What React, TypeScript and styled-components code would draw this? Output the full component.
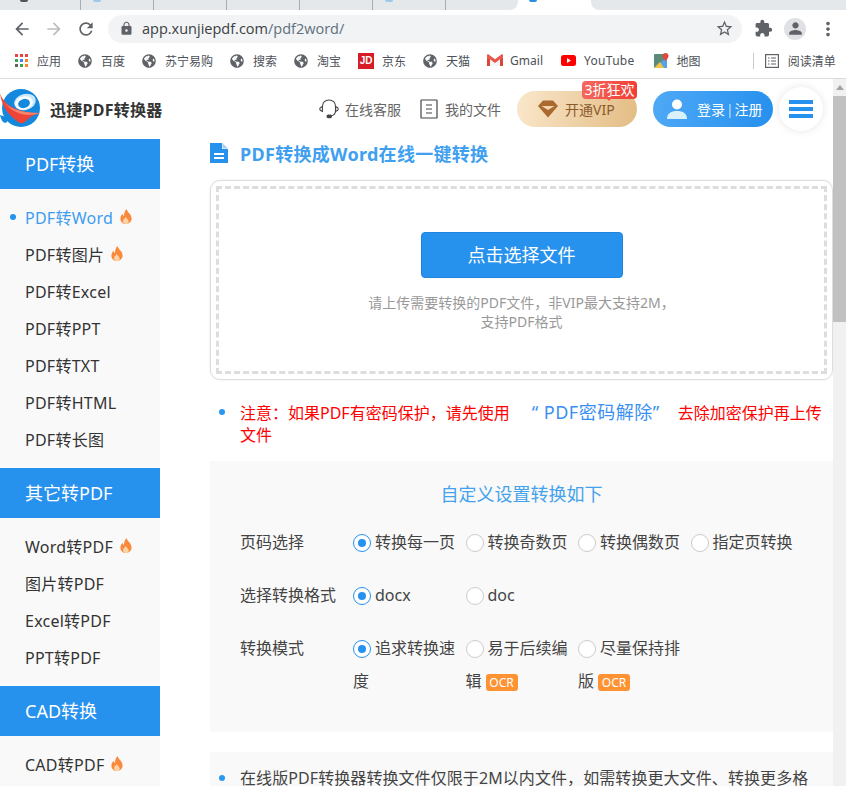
import React from 'react';
import styled, { createGlobalStyle } from 'styled-components';
import { MdArrowBack, MdArrowForward, MdRefresh, MdLock, MdStarBorder, MdExtension, MdPerson, MdMoreVert } from 'react-icons/md';
import { FaGlobeAmericas } from 'react-icons/fa';

const GlobalStyle = createGlobalStyle`
  html, body {
    margin: 0;
    padding: 0;
    height: 100%;
    overflow: hidden;
    background: #fff;
  }
  * {
    box-sizing: border-box;
  }
  body {
    font-family: "Noto Sans", "Noto Sans CJK SC", sans-serif;
    color: #333;
  }
`;

const Window = styled.div`
  width: 846px;
  height: 786px;
  display: flex;
  flex-direction: column;
  overflow: hidden;
`;

/* browser chrome */
const TabStrip = styled.div`
  height: 10px;
  flex: none;
  display: flex;
  background: #fff;
`;

const TabGroup = styled.div<{ $side: 'left' | 'right' }>`
  display: flex;
  padding-left: ${({ $side }) => ($side === 'left' ? '8px' : '0')};
  width: ${({ $side }) => ($side === 'left' ? '518px' : 'auto')};
  flex: ${({ $side }) => ($side === 'left' ? 'none' : '1')};
  background: #e5e8eb;
  border-bottom-right-radius: ${({ $side }) => ($side === 'left' ? '8px' : '0')};
  border-bottom-left-radius: ${({ $side }) => ($side === 'right' ? '8px' : '0')};
`;

const ClosedTab = styled.div`
  width: 73px;
  height: 10px;
  border-right: 1px solid #a9adb2;
  display: flex;
  align-items: flex-start;
  padding-left: 12px;
`;

const ActiveTab = styled.div`
  width: 73px;
  flex: none;
  background: #fff;
  display: flex;
  align-items: flex-start;
  padding-left: 11px;
`;

const TabFavicon = styled.span<{ $color: string }>`
  display: block;
  width: 8px;
  height: 2px;
  border-radius: 0 0 4px 4px;
  background: ${({ $color }) => $color};
`;

const Toolbar = styled.div`
  height: 33px;
  flex: none;
  display: flex;
  align-items: center;
  padding: 4px 0 0 12px;
  color: #5f6368;
`;

const NavButton = styled.span<{ $muted?: boolean }>`
  width: 20px;
  height: 20px;
  margin-right: 12px;
  font-size: 20px;
  display: flex;
  color: ${({ $muted }) => ($muted ? '#bcbdc0' : '#5f6368')};
`;

const AddressBar = styled.div`
  width: 634px;
  height: 28px;
  border-radius: 14px;
  background: #f1f3f4;
  display: flex;
  align-items: center;
  padding: 0 8px 0 11px;
  font-size: 14.5px;
  font-family: "Open Sans", "Noto Sans", sans-serif;
`;

const LockIcon = styled(MdLock)`
  font-size: 15px;
  color: #5f6368;
  margin-right: 8px;
`;

const Host = styled.span`
  color: #3c4043;
`;

const UrlPath = styled.span`
  color: #5f7080;
  flex: 1;
`;

const StarIcon = styled(MdStarBorder)`
  font-size: 19px;
  color: #5f6368;
`;

const ToolbarRight = styled.div`
  display: flex;
  align-items: center;
  margin-left: 12px;
`;

const PuzzleIcon = styled(MdExtension)`
  font-size: 19px;
  color: #5f6368;
`;

const Avatar = styled.span`
  width: 22px;
  height: 22px;
  margin-left: 11px;
  border-radius: 50%;
  background: #dfe1e5;
  color: #5f6368;
  display: flex;
  align-items: center;
  justify-content: center;
  font-size: 19px;
`;

const MoreIcon = styled(MdMoreVert)`
  font-size: 22px;
  margin-left: 11px;
  color: #5f6368;
`;

const BookmarkBar = styled.div`
  height: 36px;
  flex: none;
  display: flex;
  align-items: center;
  padding-left: 15px;
  gap: 17px;
  border-bottom: 1px solid #dadce0;
  font-size: 12px;
  color: #4c5157;
`;

const Bookmark = styled.div<{ $gap?: number; $after?: number }>`
  display: flex;
  align-items: center;
  gap: ${({ $gap }) => $gap ?? 9}px;
  margin-right: ${({ $after }) => $after ?? 0}px;
  white-space: nowrap;
`;

const LatinLabel = styled.span`
  letter-spacing: 0.3px;
`;

const GlobeIcon = styled(FaGlobeAmericas)`
  width: 14px;
  height: 14px;
  color: #5f6368;
`;

const BookmarkDivider = styled.div`
  width: 1px;
  height: 16px;
  margin-left: 35px;
  margin-right: -6px;
  background: #c9cbce;
`;

const AppsGrid = styled.span`
  width: 13px;
  height: 13px;
  display: grid;
  grid-template-columns: repeat(3, 3px);
  grid-auto-rows: 3px;
  gap: 2px;
`;

const AppsDot = styled.i<{ $color: string }>`
  display: block;
  background: ${({ $color }) => $color};
`;

const JdBadge = styled.span`
  width: 16px;
  height: 16px;
  background: #d71c24;
  color: #fff;
  font: bold 10px "Liberation Sans", sans-serif;
  display: flex;
  align-items: center;
  justify-content: center;
`;

/* site */
const PageArea = styled.div`
  flex: 1;
  min-height: 0;
  display: flex;
`;

const Page = styled.div`
  width: 833px;
  flex: none;
  display: flex;
  flex-direction: column;
  overflow: hidden;
`;

const ScrollTrack = styled.div`
  flex: 1;
  background: #f1f1f1;
  display: flex;
  flex-direction: column;
  align-items: center;
`;

const ScrollArrow = styled.span`
  margin: 6px 0 6px;
  width: 0;
  height: 0;
  border-left: 4px solid transparent;
  border-right: 4px solid transparent;
  border-bottom: 5px solid #a3a3a3;
`;

const ScrollThumb = styled.div`
  width: 100%;
  height: 226px;
  background: #c1c1c1;
`;

const Header = styled.header`
  height: 60px;
  flex: none;
  display: flex;
  align-items: center;
  justify-content: space-between;
  padding-right: 10px;
`;

const Brand = styled.div`
  display: flex;
  align-items: center;
  gap: 10px;
  font-size: 16px;
  font-weight: 700;
  letter-spacing: 0.25px;
  color: #333;
`;

const HeaderActions = styled.div`
  display: flex;
  align-items: center;
`;

const HeaderLink = styled.div<{ $gap: number; $after: number }>`
  display: flex;
  align-items: center;
  gap: ${({ $gap }) => $gap}px;
  margin-right: ${({ $after }) => $after}px;
  font-size: 14px;
  color: #666;
`;

const PillButton = styled.div<{ $kind: 'vip' | 'login' }>`
  position: relative;
  width: 120px;
  height: 36px;
  border-radius: 18px;
  display: flex;
  align-items: center;
  font-size: 14px;
  padding-left: ${({ $kind }) => ($kind === 'vip' ? '21px' : '14px')};
  gap: ${({ $kind }) => ($kind === 'vip' ? '7px' : '10px')};
  margin-right: ${({ $kind }) => ($kind === 'vip' ? '16px' : '6px')};
  color: ${({ $kind }) => ($kind === 'vip' ? '#8b5a2b' : '#fff')};
  background: ${({ $kind }) =>
    $kind === 'vip'
      ? 'linear-gradient(100deg, #fae7cb, #e3bc84)'
      : 'linear-gradient(100deg, #4fa9f6, #2590ee)'};
`;

const PromoBadge = styled.span`
  position: absolute;
  top: -10px;
  right: 0;
  width: 55px;
  height: 18px;
  border-radius: 4px;
  background: linear-gradient(100deg, #f4695f, #f23c33);
  color: #fff;
  font-size: 14px;
  line-height: 18px;
  text-align: center;
  white-space: nowrap;
  &::after {
    content: '';
    position: absolute;
    left: 24px;
    bottom: -2px;
    border-left: 3px solid transparent;
    border-right: 3px solid transparent;
    border-top: 3px solid #f4554d;
  }
`;

const LoginDivider = styled.span`
  margin: 0 1px;
  font-weight: 300;
`;

const LoginText = styled.span`
  white-space: nowrap;
`;

const MenuCircle = styled.div`
  width: 44px;
  height: 44px;
  border-radius: 50%;
  background: #fff;
  box-shadow: 0 0 8px rgba(0, 0, 0, 0.1);
  display: flex;
  flex-direction: column;
  align-items: center;
  justify-content: center;
  gap: 3px;
`;

const MenuLine = styled.span`
  width: 24px;
  height: 4px;
  background: #2791ee;
`;

const Body = styled.div`
  flex: 1;
  min-height: 0;
  display: flex;
`;

const Sidebar = styled.nav`
  width: 160px;
  flex: none;
  background: #f9f9f9;
`;

const GroupTitle = styled.div`
  height: 50px;
  background: #2791ee;
  color: #fff;
  font-size: 18px;
  line-height: 50px;
  padding-left: 25px;
`;

const GroupList = styled.ul`
  list-style: none;
  margin: 0;
  padding: 10px 0;
`;

const GroupItem = styled.li<{ $active?: boolean }>`
  position: relative;
  height: 37px;
  padding: 0 0 2px 25px;
  display: flex;
  align-items: center;
  gap: 7px;
  font-size: 16px;
  letter-spacing: 0.25px;
  color: ${({ $active }) => ($active ? '#3f9cf0' : '#333')};
  &::before {
    content: '';
    display: ${({ $active }) => ($active ? 'block' : 'none')};
    position: absolute;
    left: 10px;
    top: 15px;
    width: 6px;
    height: 6px;
    border-radius: 50%;
    background: #2791ee;
  }
`;

const Main = styled.main`
  flex: 1;
  min-width: 0;
  padding-left: 50px;
  overflow: hidden;
`;

const PageTitle = styled.h1`
  margin: 0 0 11px;
  height: 30px;
  padding-bottom: 2px;
  display: flex;
  align-items: center;
  gap: 12px;
  font-size: 18px;
  font-weight: 700;
  letter-spacing: 0.3px;
  color: #3fa0f0;
`;

const UploadCard = styled.section`
  height: 200px;
  padding: 5px;
  border: 1px solid #ddd;
  border-radius: 10px;
  box-shadow: 0 0 3px rgba(0, 0, 0, 0.08);
`;

const DropZone = styled.div`
  height: 100%;
  border: 3px dashed #ddd;
  display: flex;
  flex-direction: column;
  align-items: center;
  padding-top: 43px;
`;

const SelectButton = styled.button`
  width: 202px;
  height: 46px;
  padding: 0 0 2px;
  border: 1px solid #1f84de;
  border-radius: 4px;
  background: #2791ee;
  color: #fff;
  font-family: inherit;
  font-size: 18px;
`;

const Hint = styled.p`
  margin: 15px 0 0;
  font-size: 14px;
  line-height: 19px;
  color: #999;
  text-align: center;
`;

const Notice = styled.div`
  position: relative;
  margin-top: 21px;
  padding: 0 8px 0 30px;
  min-height: 60px;
  font-size: 16px;
  line-height: 22px;
  color: #f00;
`;

const Bullet = styled.span`
  position: absolute;
  left: 9px;
  top: 8px;
  width: 6px;
  height: 6px;
  border-radius: 50%;
  background: #2a97f0;
`;

const NoticeLink = styled.a`
  margin: 0 18px 0 22px;
  font-size: 18px;
  letter-spacing: 0.5px;
  color: #3a8ff0;
`;

const SettingsPanel = styled.section`
  height: 271px;
  background: #f9f9f9;
  padding: 18px 30px 0;
`;

const PanelTitle = styled.div`
  font-size: 18px;
  line-height: 30px;
  text-align: center;
  color: #45a2ec;
  margin-bottom: 17px;
`;

const SettingRow = styled.div`
  display: flex;
  margin-bottom: 20px;
  font-size: 16px;
  line-height: 33px;
  color: #444;
`;

const RowLabel = styled.div`
  width: 113px;
  flex: none;
`;

const OptionGrid = styled.div`
  display: flex;
`;

const Option = styled.div`
  width: 112.5px;
  flex: none;
`;

const Radio = styled.span<{ $checked?: boolean }>`
  display: inline-block;
  width: 18px;
  height: 18px;
  margin-right: 4px;
  vertical-align: -4px;
  border-radius: 50%;
  background: #fff;
  border: 1px solid ${({ $checked }) => ($checked ? '#2791ee' : '#ccc')};
  position: relative;
  &::after {
    content: '';
    display: ${({ $checked }) => ($checked ? 'block' : 'none')};
    position: absolute;
    left: 4px;
    top: 4px;
    width: 8px;
    height: 8px;
    border-radius: 50%;
    background: #2791ee;
  }
`;

const OcrTag = styled.span`
  display: inline-block;
  width: 32px;
  height: 17px;
  margin-left: 4px;
  border-radius: 3px;
  background: #ff9233;
  color: #fff;
  font-size: 12px;
  line-height: 17px;
  text-align: center;
`;

const InfoPanel = styled.section`
  position: relative;
  margin-top: 20px;
  height: 120px;
  background: #f9f9f9;
  padding: 15px 8px 0 30px;
  font-size: 16px;
  line-height: 22px;
  letter-spacing: 0.08px;
  color: #444;
`;

const InfoBullet = styled(Bullet)`
  top: 23px;
`;

/* drawings */
const Flame: React.FC = () => (
  <svg width="12" height="15" viewBox="0 0 12 15">
    <path d="M6.4 0C7 3 11.6 5 11.6 9.6 11.6 12.8 9 15 6 15 3 15 .4 12.8.4 9.7.4 7.6 1.5 6 2.6 4.8 2.8 6 3.3 6.8 4 7 4 4.400 4.800 2 6.400 0Z" fill="#f98a3c" />
    <path d="M6 15c-1.800 0-3-1.200-3-2.800 0-1.500 1.300-2.500 2.700-4.200.5 1.600 3 2.500 3 4.400C8.700 13.800 7.700 15 6 15Z" fill="#fbd3a6" />
  </svg>
);

const Logo: React.FC = () => (
  <svg width="40" height="42" viewBox="0 0 40 42">
    <circle cx="21" cy="20" r="19" fill="#1388dd" />
    <path d="M0 27C1 32 3 35 6 35L9 30Z" fill="#1388dd" />
    <ellipse cx="25" cy="14" rx="11" ry="8" fill="#cbe8f8" transform="rotate(-15 25 14)" />
    <ellipse cx="24" cy="15" rx="9" ry="6.500" fill="#fff" transform="rotate(-15 24 15)" />
    <ellipse cx="24" cy="15.500" rx="6" ry="4.500" fill="#1388dd" transform="rotate(-15 24 15.500)" />
    <path d="M0 5C3 15 14 25 40 25 33 27 30 29 27 32 24 36 20 36 17 33 9 27 2 20 0 5Z" fill="#ee4438" />
    <path d="M3 13C9 21 22 25 40 25 30 29 14 28 3 13Z" fill="#f7836f" />
  </svg>
);

const Headset: React.FC = () => (
  <svg width="20" height="20" viewBox="0 0 20 20" fill="none" stroke="#444" strokeWidth="1.100">
    <path d="M3.500 8V7C3.500 3.500 6.300 1 10 1s6.500 2.500 6.500 6v5c0 2.500-2 4.500-5 5" />
    <path d="M3.400 7.500C1.800 8 .7 9 .7 10s1.100 2 2.700 2.500ZM16.600 7.500c1.500.5 2.700 1.500 2.700 2.500s-1.200 2-2.700 2.500Z" />
    <rect x="8" y="16" width="4.500" height="2.600" rx="1.300" fill="#444" />
  </svg>
);

const FileLines: React.FC = () => (
  <svg width="18" height="20" viewBox="0 0 18 20" fill="none" stroke="#444" strokeWidth="1.200">
    <rect x="1" y="1" width="16" height="18" rx=".6" />
    <path d="M6 6h6M6 10h6M6 14h6" />
  </svg>
);

const Diamond: React.FC = () => (
  <svg width="20" height="18" viewBox="0 0 20 18">
    <path d="M5 .5h10L20 6l-10 11.500L0 6Z" fill="#a9692f" />
    <path d="M3.500 6h13L10 10Z" fill="#f3d6ae" />
  </svg>
);

const PersonIcon: React.FC = () => (
  <svg width="20" height="20" viewBox="0 0 20 20">
    <circle cx="10" cy="5.500" r="5" fill="#fff" />
    <path d="M0 20c0-5.500 4-8 10-8s10 2.500 10 8Z" fill="#d9f1fb" />
  </svg>
);

const DocIcon: React.FC = () => (
  <svg width="18" height="20" viewBox="0 0 18 20">
    <path d="M0 0h12v6h6v14H0Z" fill="#2791ee" />
    <path d="M12.500 0 18 5.500h-5.500Z" fill="#a5d0f5" />
    <path d="M4 10h10v2H4ZM4 14h10v2H4Z" fill="#fff" />
  </svg>
);

const GmailIcon: React.FC = () => (
  <svg width="16" height="13" viewBox="0 0 16 13">
    <path d="M1 12V2l7 5.500L15 2v10" fill="#f5f5f5" />
    <path d="M0 3v9h3V5ZM13 5v7h3V3Z" fill="#d8473a" />
    <path d="M0 1.500C0 .5 1 0 2 .7L8 5.200 14 .7C15 0 16 .5 16 1.500V3L8 9 0 3Z" fill="#e9564a" />
  </svg>
);

const YoutubeIcon: React.FC = () => (
  <svg width="15" height="11" viewBox="0 0 15 11">
    <rect width="15" height="11" rx="2.500" fill="#f00" />
    <path d="M6 3v5l4-2.500Z" fill="#fff" />
  </svg>
);

const MapsIcon: React.FC = () => (
  <svg width="15" height="15" viewBox="0 0 15 15">
    <rect y="1" width="13" height="14" rx="1" fill="#5b8a78" />
    <path d="M0 15 13 4v11Z" fill="#55a3e6" />
    <path d="M0 15 6 9l4 6Z" fill="#f4c542" />
    <path d="M11.500 0C9.800 0 8.500 1.300 8.500 3c0 2 3 5 3 5s3-3 3-5C14.500 1.300 13.200 0 11.500 0Z" fill="#e2483d" />
  </svg>
);

const ReadingListIcon: React.FC = () => (
  <svg width="14" height="14" viewBox="0 0 14 14" fill="none" stroke="#5f6368" strokeWidth="1.200">
    <rect x=".6" y=".6" width="12.800" height="12.800" />
    <path d="M3 4h1.500M3 7h1.500M3 10h1.500M6 4h5M6 7h5M6 10h5" />
  </svg>
);

const appColors = ['#e8453c', '#e8453c', '#e8453c', '#34a853', '#4285f4', '#f58b1f', '#5f6368', '#34a853', '#f58b1f'];
const globeSites = ['百度', '苏宁易购', '搜索', '淘宝'];

const pdfItems = [
  { name: 'PDF转Word', hot: true, active: true },
  { name: 'PDF转图片', hot: true },
  { name: 'PDF转Excel' },
  { name: 'PDF转PPT' },
  { name: 'PDF转TXT' },
  { name: 'PDF转HTML' },
  { name: 'PDF转长图' },
];

const otherItems = [
  { name: 'Word转PDF', hot: true },
  { name: '图片转PDF' },
  { name: 'Excel转PDF' },
  { name: 'PPT转PDF' },
];

const cadItems = [{ name: 'CAD转PDF', hot: true }];

type NavItem = { name: string; hot?: boolean; active?: boolean };

const NavGroup: React.FC<{ title: string; items: NavItem[] }> = ({ title, items }) => (
  <>
    <GroupTitle>{title}</GroupTitle>
    <GroupList>
      {items.map((item) => (
        <GroupItem key={item.name} $active={item.active}>
          {item.name}
          {item.hot && <Flame />}
        </GroupItem>
      ))}
    </GroupList>
  </>
);

const App: React.FC = () => {
  return (
    <Window>
      <GlobalStyle />
      <TabStrip>
        <TabGroup $side="left">
          <ClosedTab><TabFavicon $color="#555" /></ClosedTab>
          <ClosedTab><TabFavicon $color="#9cc8ea" /></ClosedTab>
          <ClosedTab />
          <ClosedTab />
          <ClosedTab />
          <ClosedTab><TabFavicon $color="#9cc8ea" /></ClosedTab>
        </TabGroup>
        <ActiveTab><TabFavicon $color="#2a8fe0" /></ActiveTab>
        <TabGroup $side="right" />
      </TabStrip>
      <Toolbar>
        <NavButton><MdArrowBack /></NavButton>
        <NavButton $muted><MdArrowForward /></NavButton>
        <NavButton><MdRefresh /></NavButton>
        <AddressBar>
          <LockIcon />
          <Host>app.xunjiepdf.com</Host>
          <UrlPath>/pdf2word/</UrlPath>
          <StarIcon />
        </AddressBar>
        <ToolbarRight>
          <PuzzleIcon />
          <Avatar><MdPerson /></Avatar>
          <MoreIcon />
        </ToolbarRight>
      </Toolbar>
      <BookmarkBar>
        <Bookmark>
          <AppsGrid>
            {appColors.map((c, i) => <AppsDot key={i} $color={c} />)}
          </AppsGrid>
          应用
        </Bookmark>
        {globeSites.map((s) => (
          <Bookmark key={s}><GlobeIcon />{s}</Bookmark>
        ))}
        <Bookmark $gap={8}><JdBadge>JD</JdBadge>京东</Bookmark>
        <Bookmark><GlobeIcon />天猫</Bookmark>
        <Bookmark $gap={7} $after={1}><GmailIcon />Gmail</Bookmark>
        <Bookmark $gap={8} $after={2}><YoutubeIcon /><LatinLabel>YouTube</LatinLabel></Bookmark>
        <Bookmark $gap={8}><MapsIcon />地图</Bookmark>
        <BookmarkDivider />
        <Bookmark><ReadingListIcon />阅读清单</Bookmark>
      </BookmarkBar>
      <PageArea>
        <Page>
          <Header>
            <Brand><Logo />迅捷PDF转换器</Brand>
            <HeaderActions>
              <HeaderLink $gap={6} $after={19}><Headset />在线客服</HeaderLink>
              <HeaderLink $gap={7} $after={16}><FileLines />我的文件</HeaderLink>
              <PillButton $kind="vip">
                <Diamond />开通VIP
                <PromoBadge>3折狂欢</PromoBadge>
              </PillButton>
              <PillButton $kind="login">
                <PersonIcon />
                <LoginText>登录<LoginDivider>|</LoginDivider>注册</LoginText>
              </PillButton>
              <MenuCircle>
                <MenuLine />
                <MenuLine />
                <MenuLine />
              </MenuCircle>
            </HeaderActions>
          </Header>
          <Body>
            <Sidebar>
              <NavGroup title="PDF转换" items={pdfItems} />
              <NavGroup title="其它转PDF" items={otherItems} />
              <NavGroup title="CAD转换" items={cadItems} />
            </Sidebar>
            <Main>
              <PageTitle><DocIcon />PDF转换成Word在线一键转换</PageTitle>
              <UploadCard>
                <DropZone>
                  <SelectButton>点击选择文件</SelectButton>
                  <Hint>
                    请上传需要转换的PDF文件，非VIP最大支持2M，<br />
                    支持PDF格式
                  </Hint>
                </DropZone>
              </UploadCard>
              <Notice>
                <Bullet />
                注意：如果PDF有密码保护，请先使用
                <NoticeLink>“ PDF密码解除”</NoticeLink>
                去除加密保护再上传文件
              </Notice>
              <SettingsPanel>
                <PanelTitle>自定义设置转换如下</PanelTitle>
                <SettingRow>
                  <RowLabel>页码选择</RowLabel>
                  <OptionGrid>
                    <Option><Radio $checked />转换每一页</Option>
                    <Option><Radio />转换奇数页</Option>
                    <Option><Radio />转换偶数页</Option>
                    <Option><Radio />指定页转换</Option>
                  </OptionGrid>
                </SettingRow>
                <SettingRow>
                  <RowLabel>选择转换格式</RowLabel>
                  <OptionGrid>
                    <Option><Radio $checked />docx</Option>
                    <Option><Radio />doc</Option>
                  </OptionGrid>
                </SettingRow>
                <SettingRow>
                  <RowLabel>转换模式</RowLabel>
                  <OptionGrid>
                    <Option><Radio $checked />追求转换速度</Option>
                    <Option><Radio />易于后续编辑<OcrTag>OCR</OcrTag></Option>
                    <Option><Radio />尽量保持排版<OcrTag>OCR</OcrTag></Option>
                  </OptionGrid>
                </SettingRow>
              </SettingsPanel>
              <InfoPanel>
                <InfoBullet />
                在线版PDF转换器转换文件仅限于2M以内文件，如需转换更大文件、转换更多格
              </InfoPanel>
            </Main>
          </Body>
        </Page>
        <ScrollTrack>
          <ScrollArrow />
          <ScrollThumb />
        </ScrollTrack>
      </PageArea>
    </Window>
  );
};

export default App;
